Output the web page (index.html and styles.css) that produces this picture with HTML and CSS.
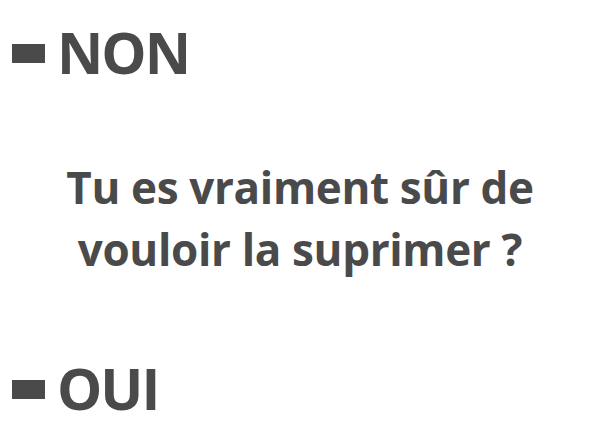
FILE: index.html
```html
<!DOCTYPE html>
<html lang="fr">
<head>
<meta charset="utf-8">
<link rel="stylesheet" href="styles.css">
</head>
<body>
<div class="page">
  <div class="choice choice-no"><span class="bar"></span><span class="label">NON</span></div>
  <p class="question">Tu es vraiment sûr de vouloir la suprimer ?</p>
  <div class="choice choice-yes"><span class="bar"></span><span class="label">OUI</span></div>
</div>
</body>
</html>
```
FILE: styles.css
```css
html, body {
  margin: 0;
  padding: 0;
  background: #ffffff;
}
.page {
  width: 600px;
  height: 448px;
  overflow: hidden;
  font-family: "Open Sans", "Noto Sans", sans-serif;
  font-weight: 700;
  color: #4a4a4a;
}
.choice {
  display: flex;
  align-items: center;
  gap: 12px;
  padding-left: 12px;
  font-size: 57px;
  line-height: 82px;
  letter-spacing: -2px;
}
.choice-no {
  padding-top: 11px;
}
.bar {
  display: block;
  width: 33px;
  height: 19px;
  background: #4a4a4a;
  margin-top: 2px;
}
.label {
  display: block;
}
.question {
  margin: 63px auto 0;
  width: 520px;
  text-align: center;
  font-size: 44px;
  line-height: 62px;
  letter-spacing: -0.35px;
}
.choice-yes {
  margin-top: 67px;
}
```
